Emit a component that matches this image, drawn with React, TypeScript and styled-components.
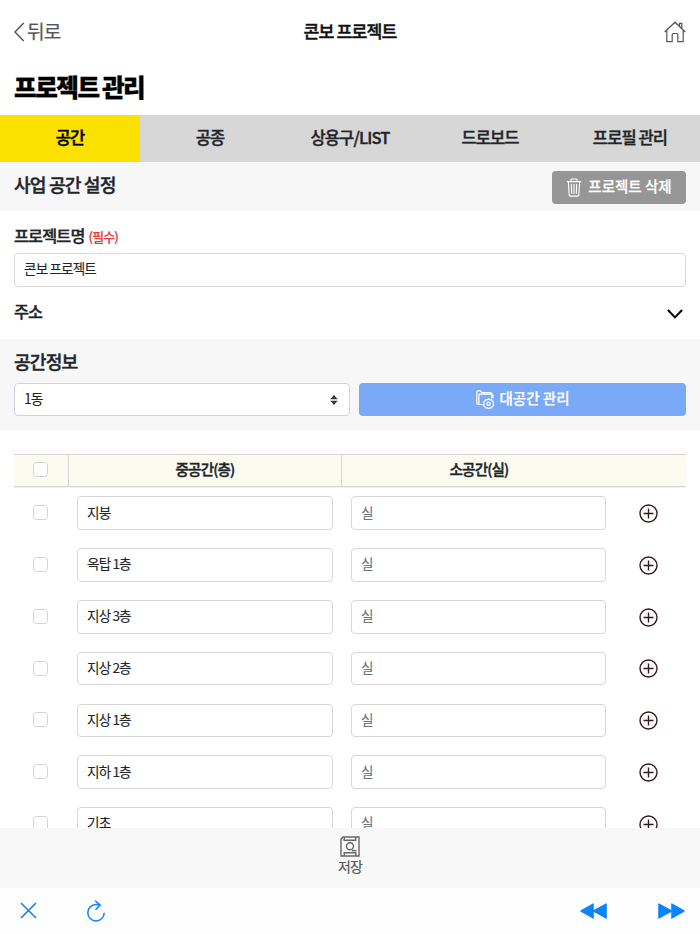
import React from "react";
import styled, { createGlobalStyle, css } from "styled-components";

const GlobalStyle = createGlobalStyle`
  *, *::before, *::after { box-sizing: border-box; }
  html, body { margin: 0; padding: 0; overflow: hidden; background: #fff; }
  body {
    font-family: "Noto Sans CJK KR", "Noto Sans", sans-serif;
    letter-spacing: -0.055em;
    color: #212529;
  }
  button, input { font: inherit; letter-spacing: inherit; color: inherit; }
  button { border: 0; padding: 0; background: none; cursor: pointer; }
  svg { display: block; flex: none; }
`;

const Page = styled.div`
  width: 700px;
  height: 934px;
  display: flex;
  flex-direction: column;
  overflow: hidden;
  background: #fff;
`;

const TopBar = styled.header`
  flex: none;
  height: 64px;
  padding: 0 14px;
  display: grid;
  grid-template-columns: 1fr auto 1fr;
  align-items: center;
`;

const BackButton = styled.button`
  display: flex;
  align-items: center;
  gap: 2px;
  justify-self: start;
  font-size: 19.2px;
  line-height: 28px;
  color: #555;
  -webkit-text-stroke: 0.2px #555;
`;

const BackLabel = styled.span`
  padding-bottom: 2px;
`;

const TopTitle = styled.div`
  padding-bottom: 2px;
  font-size: 17.3px;
  font-weight: 500;
  line-height: 26px;
  color: #111;
  -webkit-text-stroke: 0.4px #111;
`;

const HomeButton = styled.button`
  justify-self: end;
`;

const PageTitle = styled.h1`
  flex: none;
  margin: 0;
  height: 51px;
  padding: 5px 14px 0;
  font-size: 24.6px;
  font-weight: 900;
  line-height: 35px;
  letter-spacing: -0.059em;
  word-spacing: -1px;
  color: #000;
  -webkit-text-stroke: 0.3px #000;
`;

const Tabs = styled.nav`
  flex: none;
  display: grid;
  grid-template-columns: repeat(5, 1fr);
  height: 47px;
`;

const Tab = styled.button<{ $active?: boolean }>`
  font-size: 16.5px;
  font-weight: 500;
  line-height: 24px;
  padding-bottom: 4px;
  background: ${(p) => (p.$active ? "#fbe100" : "#d7d7d7")};
  color: ${(p) => (p.$active ? "#000" : "#212529")};
  -webkit-text-stroke: 0.4px currentColor;
`;

const SettingsBar = styled.section`
  flex: none;
  height: 49px;
  padding: 0 14px;
  display: flex;
  justify-content: space-between;
  align-items: flex-start;
  background: #f7f7f7;
`;

const SectionTitle = styled.h2`
  margin: 0;
  padding-top: 8px;
  font-size: 18.2px;
  font-weight: 500;
  line-height: 28px;
  -webkit-text-stroke: 0.4px currentColor;
`;

const ActionButton = styled.button<{ $tone: "gray" | "blue" }>`
  display: flex;
  align-items: center;
  justify-content: center;
  gap: 6px;
  border-radius: 4px;
  color: #fff;
  font-size: 14.5px;
  font-weight: 500;
  line-height: 20px;
  letter-spacing: 0;
  -webkit-text-stroke: 0.25px #fff;
  ${(p) =>
    p.$tone === "gray"
      ? css`
          width: 134px;
          height: 33.5px;
          margin-top: 8.5px;
          background: #969696;
        `
      : css`
          width: 327px;
          height: 33px;
          background: #79a9f7;
        `}
`;

const ActionLabel = styled.span`
  padding-bottom: 3px;
`;

const FormSection = styled.section`
  flex: none;
  height: 128px;
  padding: 0 14px;
`;

const FieldLabel = styled.div`
  display: flex;
  align-items: baseline;
  gap: 4px;
  height: 42px;
  padding-top: 11px;
  font-size: 16.3px;
  font-weight: 500;
  line-height: 26px;
  -webkit-text-stroke: 0.4px currentColor;
`;

const Required = styled.span`
  font-size: 12.9px;
  color: #e63c3c;
  -webkit-text-stroke: 0.2px currentColor;
`;

const TextInput = styled.input`
  display: block;
  width: 100%;
  height: 33.5px;
  padding: 0 9px 3px;
  border: 1px solid #d8d8d8;
  border-radius: 4px;
  outline: 0;
  background: #fff;
  font-size: 13.6px;
  color: #212529;
  -webkit-text-stroke: 0.12px currentColor;
  &::placeholder { color: #6c757d; opacity: 1; }
`;

const AddressRow = styled.div`
  display: flex;
  justify-content: space-between;
  align-items: flex-start;
  padding-top: 12px;
  font-size: 16.3px;
  font-weight: 500;
  line-height: 25px;
  -webkit-text-stroke: 0.4px currentColor;
  svg { margin: 10px 3px 0 0; }
`;

const SpaceSection = styled.section`
  flex: none;
  height: 91px;
  padding: 0 14px;
  background: #f7f7f7;
`;

const SpaceTitle = styled(SectionTitle)`
  height: 44px;
`;

const SpaceControls = styled.div`
  display: flex;
  justify-content: space-between;
`;

const SelectBox = styled.button`
  width: 336px;
  height: 33px;
  padding: 0 11px 0 9px;
  display: flex;
  justify-content: space-between;
  align-items: center;
  border: 1px solid #ced4da;
  border-radius: 4px;
  background: #fff;
  font-size: 13.8px;
  line-height: 20px;
  -webkit-text-stroke: 0.12px currentColor;
  span { padding-bottom: 4px; }
`;

const SpaceTable = styled.section`
  flex: 1;
  min-height: 0;
  overflow: hidden;
  padding: 24px 14px 0;
`;

const TableHead = styled.div`
  display: grid;
  grid-template-columns: 55px 273px 1fr 70px;
  height: 33px;
  margin-bottom: 0.3px;
  border-top: 1px solid #d5d5d5;
  border-bottom: 1px solid #d5d5d5;
  background: #fbfbf0;
  box-shadow: 0 1px 0 #f1f1f1;
`;

const HeadCell = styled.div<{ $divider?: boolean }>`
  display: flex;
  align-items: center;
  justify-content: center;
  padding-bottom: 3px;
  font-size: 14.6px;
  font-weight: 500;
  line-height: 20px;
  border-right: ${(p) => (p.$divider ? "1px solid #d5d5d5" : "0")};
  -webkit-text-stroke: 0.4px currentColor;
`;

const HeadCheckCell = styled(HeadCell)`
  padding: 0 2px 2px 0;
`;

const TableRow = styled.div`
  display: grid;
  grid-template-columns: 54px 274px 273px 1fr;
  align-items: center;
  height: 51.8px;
`;

const InputCell = styled.div`
  padding: 0 9px;
`;

const CheckCell = styled.div`
  display: flex;
  justify-content: center;
  padding: 0 1px 1px 0;
`;

const Checkbox = styled.input.attrs({ type: "checkbox" })`
  appearance: none;
  width: 15px;
  height: 15px;
  margin: 0;
  border: 1px solid #d3d3d3;
  border-radius: 3.5px;
  background: #fff;
`;

const AddButton = styled.button`
  display: flex;
  justify-content: center;
  padding: 0.5px 5px 0 0;
`;

const SaveBar = styled.footer`
  flex: none;
  height: 60px;
  display: flex;
  justify-content: center;
  background: #f8f8f8;
`;

const SaveButton = styled.button`
  display: flex;
  flex-direction: column;
  align-items: center;
  justify-content: flex-start;
  padding: 8px 0 3px;
  font-size: 14px;
  line-height: 18px;
  color: #555;
  -webkit-text-stroke: 0.15px #555;
`;

const BrowserBar = styled.nav`
  flex: none;
  height: 46px;
  padding: 0 15px 0 20px;
  display: flex;
  align-items: center;
  justify-content: space-between;
  background: #fefefe;
`;

const BrowserGroup = styled.div<{ $gap: number }>`
  display: flex;
  align-items: center;
  gap: ${(p) => p.$gap}px;
  padding-bottom: 1px;
`;

const BackIcon = () => (
  <svg width="11" height="20" viewBox="0 0 11 20" fill="none" stroke="#555" strokeWidth="1.5">
    <path d="M9.7 1 1 10l8.7 9" />
  </svg>
);

const HomeIcon = () => (
  <svg width="22" height="22" viewBox="0 0 22 22" fill="none" stroke="#555" strokeWidth="1.2">
    <path d="M.7 11 11 1.2 21.3 11M2.8 9.5v11.2h5.4v-7.2q0-1 1-1h3.6q1 0 1 1v7.2h5.4V9.5M15.5 5V2.4h2.3v4.9" />
  </svg>
);

const TrashIcon = () => (
  <svg width="16" height="19" viewBox="0 0 16 19" fill="none" stroke="#fff" strokeWidth="1.1">
    <path d="M.8 3.6h14.4M5 3.3V1.8q0-.8.8-.8h4.4q.8 0 .8.8v1.5M2.3 3.8l.9 13.1q.1 1.2 1.2 1.2h7.2q1.1 0 1.2-1.2l.9-13.1M5.3 6l.4 9.8M8 6v9.8M10.7 6l-.4 9.8" />
  </svg>
);

const FolderIcon = () => (
  <svg width="18" height="19" viewBox="0 0 18 19" fill="none" stroke="#fff" strokeWidth="1.2">
    <path d="M6.8 14.5H2.2q-1.4 0-1.4-1.4V2Q.8.9 1.9.9h2.8l1.1 1.7h8.5q1.4 0 1.4 1.4v4.4M2.9 14.2V5q0-.8.8-.8H16q1 0 1 1v3.1" />
    <path d="m12.6 8.8 1.4 1 1.7-.1.7 1.6 1.3.9-.6 1.6.6 1.6-1.3.9-.7 1.6-1.7-.1-1.4.9-1.4-.9-1.7.1-.7-1.6-1.3-.9.6-1.6-.6-1.6 1.3-.9.7-1.6 1.7.1z" />
    <circle cx="12.6" cy="13.7" r="1.7" />
  </svg>
);

const ChevronIcon = () => (
  <svg width="16" height="10" viewBox="0 0 16 10" fill="none" stroke="#000" strokeWidth="2">
    <path d="m.9 1 7.1 7.4L15.1 1" />
  </svg>
);

const SortIcon = () => (
  <svg width="8" height="10" viewBox="0 0 8 10" fill="#343a40">
    <path d="M4 0 7.7 4.2H.3zM4 10 .3 5.8h7.4z" />
  </svg>
);

const PlusIcon = () => (
  <svg width="19" height="19" viewBox="0 0 19 19" fill="none" stroke="#341a1d" strokeWidth="1.4">
    <circle cx="9.5" cy="9.5" r="8.5" />
    <path d="M4.5 9.5h10M9.5 4.5v10" />
  </svg>
);

const SaveIcon = () => (
  <svg width="20" height="21" viewBox="0 0 20 21" fill="none" stroke="#666" strokeWidth="1.4">
    <path d="M3 1h16v19H1V3zM4.2 1v3.3h11.5V1M4.2 20v-3.2h11.5V20" />
    <circle cx="10" cy="10.2" r="3.5" />
    <path d="M12 14.6h4.5" />
  </svg>
);

const CloseIcon = () => (
  <svg width="17" height="17" viewBox="0 0 17 17" fill="none" stroke="#0a84ff" strokeWidth="1.6">
    <path d="m1 1 15 15M16 1 1 16" />
  </svg>
);

const ReloadIcon = () => (
  <svg width="18" height="22" viewBox="0 0 18 22" fill="none" stroke="#0a84ff" strokeWidth="1.5">
    <path d="M17.2 12.7A8.2 8.2 0 1 1 9 4.5q2 0 4 .4M8.2.8l5 4.3-4.7 4.7" />
  </svg>
);

const SeekIcon = ({ forward = false }: { forward?: boolean }) => (
  <svg width="27" height="16" viewBox="0 0 27 16" fill="#0a84ff">
    <path
      d={
        forward
          ? "M.2.8Q.2-.2 1.2.4L13.2 7V.8q0-1 1-.4l12 6.9q1 .7 0 1.4l-12 6.9q-1 .6-1-.4V9l-12 6.6q-1 .6-1-.4z"
          : "M26.8.8q0-1-1-.4L13.8 7V.8q0-1-1-.4l-12 6.9q-1 .7 0 1.4l12 6.9q1 .6 1-.4V9l12 6.6q1 .6 1-.4z"
      }
    />
  </svg>
);

const tabs = ["공간", "공종", "상용구/LIST", "드로보드", "프로필 관리"];
const floors = ["지붕", "옥탑 1층", "지상 3층", "지상 2층", "지상 1층", "지하 1층", "기초"];

export default function App() {
  return (
    <>
      <GlobalStyle />
      <Page>
        <TopBar>
          <BackButton>
            <BackIcon />
            <BackLabel>뒤로</BackLabel>
          </BackButton>
          <TopTitle>콘보 프로젝트</TopTitle>
          <HomeButton aria-label="홈">
            <HomeIcon />
          </HomeButton>
        </TopBar>
        <PageTitle>프로젝트 관리</PageTitle>
        <Tabs>
          {tabs.map((tab, i) => (
            <Tab key={tab} $active={i === 0}>
              {tab}
            </Tab>
          ))}
        </Tabs>
        <SettingsBar>
          <SectionTitle>사업 공간 설정</SectionTitle>
          <ActionButton $tone="gray">
            <TrashIcon />
            <ActionLabel>프로젝트 삭제</ActionLabel>
          </ActionButton>
        </SettingsBar>
        <FormSection>
          <FieldLabel>
            프로젝트명<Required>(필수)</Required>
          </FieldLabel>
          <TextInput defaultValue="콘보 프로젝트" />
          <AddressRow>
            주소
            <ChevronIcon />
          </AddressRow>
        </FormSection>
        <SpaceSection>
          <SpaceTitle>공간정보</SpaceTitle>
          <SpaceControls>
            <SelectBox>
              <span>1동</span>
              <SortIcon />
            </SelectBox>
            <ActionButton $tone="blue">
              <FolderIcon />
              <ActionLabel>대공간 관리</ActionLabel>
            </ActionButton>
          </SpaceControls>
        </SpaceSection>
        <SpaceTable>
          <TableHead>
            <HeadCheckCell $divider>
              <Checkbox />
            </HeadCheckCell>
            <HeadCell $divider>중공간(층)</HeadCell>
            <HeadCell>소공간(실)</HeadCell>
          </TableHead>
          {floors.map((floor) => (
            <TableRow key={floor}>
              <CheckCell>
                <Checkbox />
              </CheckCell>
              <InputCell>
                <TextInput defaultValue={floor} />
              </InputCell>
              <InputCell>
                <TextInput placeholder="실" />
              </InputCell>
              <AddButton aria-label="추가">
                <PlusIcon />
              </AddButton>
            </TableRow>
          ))}
        </SpaceTable>
        <SaveBar>
          <SaveButton>
            <SaveIcon />
            저장
          </SaveButton>
        </SaveBar>
        <BrowserBar>
          <BrowserGroup $gap={50}>
            <CloseIcon />
            <ReloadIcon />
          </BrowserGroup>
          <BrowserGroup $gap={51}>
            <SeekIcon />
            <SeekIcon forward />
          </BrowserGroup>
        </BrowserBar>
      </Page>
    </>
  );
}
